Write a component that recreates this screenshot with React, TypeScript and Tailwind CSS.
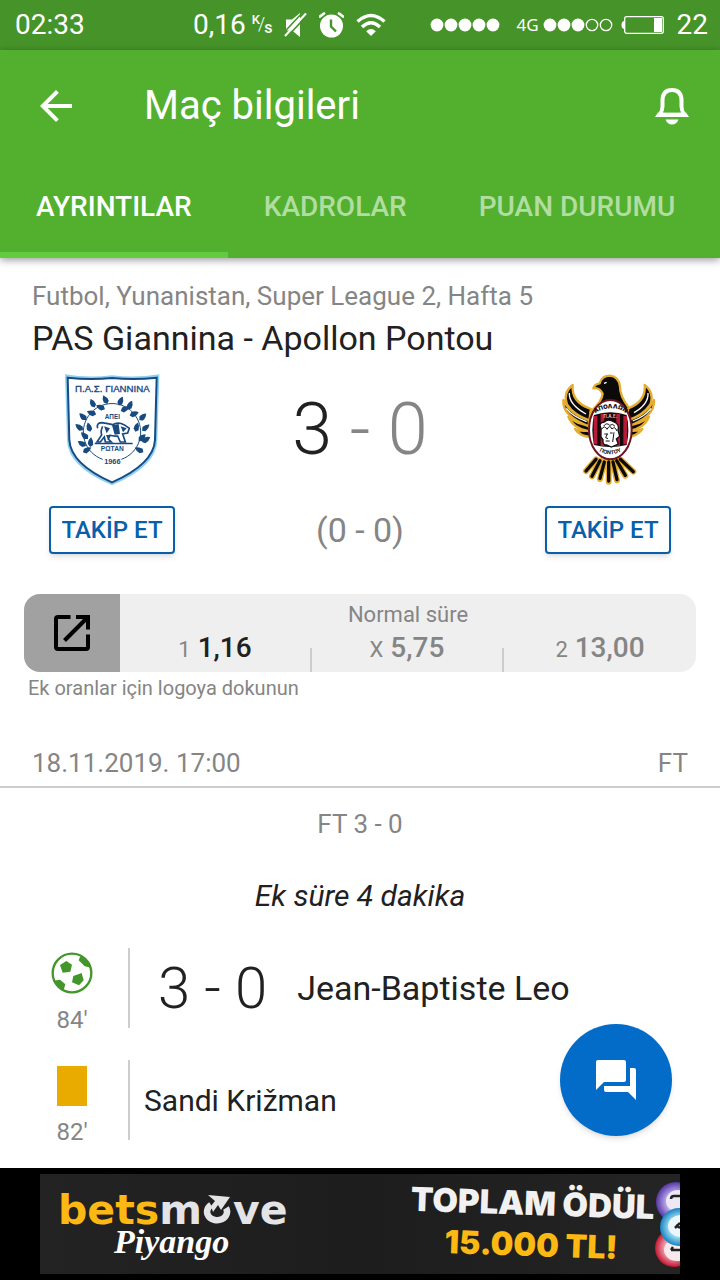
import type { ReactNode } from 'react';
import { MdArrowBack, MdForum } from 'react-icons/md';

interface Odd {
  label: string;
  value: string;
  winner?: boolean;
}

const TABS = ['AYRINTILAR', 'KADROLAR', 'PUAN DURUMU'];

const ODDS: Odd[] = [
  { label: '1', value: '1,16', winner: true },
  { label: 'X', value: '5,75' },
  { label: '2', value: '13,00' },
];

function SignalDots({ filled }: { filled: number }) {
  return (
    <svg width="70" height="14" viewBox="0 0 70 14">
      {[0, 1, 2, 3, 4].map((i) =>
        i < filled ? (
          <circle key={i} cx={7 + i * 14} cy="7" r="6.4" fill="#fff" />
        ) : (
          <circle key={i} cx={7 + i * 14} cy="7" r="5.7" fill="none" stroke="#fff" strokeWidth="1.3" />
        ),
      )}
    </svg>
  );
}

function MuteIcon() {
  return (
    <svg width="23" height="26" viewBox="0 0 23 26">
      <path d="M2 7.500H8L16 1V25L8 18.500H2Z" fill="#fff" />
      <path d="M-1.500 22L20 -1" stroke="#469429" strokeWidth="1.600" />
      <path d="M1 24L22 1.500" stroke="#fff" strokeWidth="2.200" />
      <path d="M2.500 25.500L23 3.500" stroke="#469429" strokeWidth="1.600" />
    </svg>
  );
}

function AlarmIcon() {
  return (
    <svg width="25" height="26" viewBox="0 0 25 26">
      <circle cx="12.500" cy="14" r="11.500" fill="#fff" />
      <path d="M1 4.500L5 1.500M24 4.500L20 1.500" stroke="#fff" strokeWidth="2.800" strokeLinecap="round" />
      <path d="M12 7.500V14.500L17 19.500" fill="none" stroke="#469429" strokeWidth="2.400" />
    </svg>
  );
}

function WifiIcon() {
  return (
    <svg width="30" height="24" viewBox="0 0 30 24" fill="none" stroke="#fff" strokeWidth="3.400">
      <path d="M1.500 8.500Q15 -3.500 28.500 8.500" />
      <path d="M6 14Q15 5.500 24 14" />
      <path d="M15 23L10.200 18.200Q15 14 19.800 18.200Z" fill="#fff" stroke="none" />
    </svg>
  );
}

function BatteryIcon() {
  return (
    <svg width="44" height="20" viewBox="0 0 44 20">
      <path d="M3.500 6Q.5 6 .5 10T3.500 14Z" fill="#fff" />
      <rect x="3.700" y="1.700" width="38.600" height="16.600" rx="2" fill="none" stroke="#fff" strokeWidth="1.300" />
      <rect x="33" y="3" width="8" height="14" fill="#fff" />
    </svg>
  );
}

function BellIcon() {
  return (
    <svg width="36" height="40" viewBox="0 0 36 40">
      <path
        d="M6 28.500Q8.500 25 8.500 21V14.500C8.500 7.500 12 4 18 4S27.500 7.500 27.500 14.500V21Q27.500 25 30 28.500Z"
        fill="none"
        stroke="#fff"
        strokeWidth="4"
      />
      <path d="M1 31L4 26.500H32L35 31Z" fill="#fff" />
      <path d="M9 26.600Q10.500 24 10.500 21.500H25.500Q25.500 24 27 26.600Z" fill="#52b02e" />
      <path d="M11.500 33.500H24.500Q22.500 38.500 18 38.500T11.500 33.500Z" fill="#fff" />
    </svg>
  );
}

function OpenIcon() {
  return (
    <svg width="38" height="38" viewBox="0 0 38 38" fill="none" stroke="#000" strokeWidth="4">
      <path d="M17.500 3H5Q3 3 3 5V33Q3 35 5 35H33Q35 35 35 33V20.500" />
      <path d="M11.500 26.500L34 4" />
      <path d="M23 1H37V15.500H33V7.500L30.500 5H23Z" fill="#000" stroke="none" />
    </svg>
  );
}

function BallIcon() {
  return (
    <svg width="42" height="42" viewBox="63 35 126 126">
      <circle cx="126" cy="98" r="58" fill="none" stroke="#43962a" strokeWidth="7" />
      <g fill="#43962a">
        <path d="M90 74L109 62L126 73L121 94L98 97Z" />
        <path d="M130 107L155 98L161 120L147 135L126 126Z" />
        <path d="M146 60L151 48Q176 58 184 82L164 78Z" />
        <path d="M70 121L90 118L106 132L101 149Q80 142 70 121Z" />
      </g>
    </svg>
  );
}

// x, y, rotation of every leaf around the ring
const LEAVES: [number, number, number][] = [
  [166, 104, 25], [152, 127, 65], [128, 115, 25], [125, 144, 70], [99, 155, 45],
  [117, 187, 15], [88, 187, 50], [104, 212, 45], [96, 236, 60], [122, 232, -5],
  [111, 255, -60], [212, 109, -25], [225, 132, -65], [240, 121, -25], [252, 147, -70],
  [278, 156, -45], [260, 187, -15], [287, 188, -50], [276, 218, -45], [288, 224, -60],
  [268, 255, 60],
];

function GianninaCrest() {
  return (
    <svg width="96" height="112" viewBox="42 27 288 336" role="img" aria-label="PAS Giannina">
      <path d="M45 28Q115 40 186 31Q257 40 328 28L322 225Q321 304 186 361Q52 304 51 225Z" fill="#8fd0f2" />
      <path
        d="M53 38Q120 46 186 39Q253 46 320 38L315 225Q311 297 186 352Q62 297 58 225Z"
        fill="#fff"
        stroke="#164b84"
        strokeWidth="6"
      />
      <text x="187" y="81" textAnchor="middle" fontSize="29" fill="#184a80" stroke="#184a80" strokeWidth="1" className="font-['Liberation_Sans']">
        Π.Α.Σ. ΓΙΑΝΝΙΝΑ
      </text>
      <path d="M158 283A86 86 0 1 1 214 283" fill="none" stroke="#184a80" strokeWidth="3" />
      <g fill="#184a80">
        {LEAVES.map(([x, y, r]) => (
          <path key={`${x}-${y}`} d="M0 -15Q9 -5 8 7L0 14L-8 6Q-9 -6 0 -15Z" transform={`translate(${x} ${y}) rotate(${-r})`} />
        ))}
        <text x="187" y="163" textAnchor="middle" fontSize="19" fontWeight="700" className="font-['Liberation_Sans']">ΑΠΕΙ</text>
        <text x="187" y="257" textAnchor="middle" fontSize="20" fontWeight="700" className="font-['Liberation_Sans']">ΡΩΤΑΝ</text>
        <text x="187" y="297" textAnchor="middle" fontSize="22" fontWeight="700" className="font-['Liberation_Sans']">1966</text>
        <path d="M134 233H248V238H134Z" />
      </g>
      <path
        d="M143 190Q138 174 155 173Q175 176 188 179Q204 170 222 179L238 190L233 204L218 207L226 231H211L203 213Q188 214 180 211L175 222L184 231H166L163 216L151 231H141L155 210Q151 198 158 184"
        fill="#fff"
        stroke="#184a80"
        strokeWidth="5"
      />
      <path d="M186 181L194 209L210 207L206 177ZM162 184L170 205L180 190ZM212 184L230 190L219 202ZM168 210L175 226L180 210Z" fill="#184a80" />
    </svg>
  );
}

function ApollonWing() {
  return (
    <>
      <path d="M105 192Q120 214 152 216L150 196Q120 201 105 192Z" />
      <path d="M85 155Q99 191 148 199L147 180Q110 178 85 155Z" />
      <path d="M70 105Q66 154 147 184L146 163Q92 150 70 105Z" />
      <path d="M98 60Q68 83 81 118Q102 150 148 166L153 132Q93 112 98 60Z" />
    </>
  );
}

function ApollonCrest() {
  return (
    <svg width="96" height="112" viewBox="60 27 288 336" role="img" aria-label="Apollon Pontou">
      {/* tail: gold outline first, black feathers over it */}
      <g fill="none" strokeLinecap="round">
        <path
          d="M168 283L138 318M180 287L156 334M193 291L180 342M206 291V350M219 291L231 346M230 287L256 332M241 283L280 320"
          stroke="#e5ad2f"
          strokeWidth="18"
        />
        <path
          d="M168 283L138 318M180 287L156 334M193 291L180 340M206 291V348M219 291L231 344M230 287L256 331M241 283L280 320"
          stroke="#0c0a08"
          strokeWidth="10"
        />
      </g>
      <g fill="#0c0a08" stroke="#e5ad2f" strokeWidth="7" strokeLinejoin="round">
        <ApollonWing />
        <g transform="matrix(-1 0 0 1 412 0)">
          <ApollonWing />
        </g>
        <path d="M160 70Q164 57 179 55Q186 32 209 32Q236 34 240 65Q239 92 266 128L255 165H165L152 140Q186 110 188 86Q178 66 160 70Z" />
      </g>
      <path d="M88 84Q86 118 138 147M79 130Q97 154 140 170" fill="none" stroke="#fff" strokeWidth="4" />
      <path d="M324 84Q326 118 282 143M333 130Q315 154 278 168" fill="none" stroke="#fff" strokeWidth="4" />
      <path d="M192 55L200 52" stroke="#fff" strokeWidth="4" />
      <ellipse cx="211" cy="194" rx="64" ry="89" fill="#fff" stroke="#6d1422" strokeWidth="6" />
      <path d="M162 150Q186 142 211 142T260 150Q270 194 260 240Q236 246 211 246T162 240Q152 194 162 150Z" fill="#16090c" />
      <path d="M161 153H172V238H161ZM182 146H193V243H182ZM229 146H240V243H229ZM250 153H261V238H250Z" fill="#b31b36" />
      <path
        d="M183 190Q174 173 193 171Q205 160 222 171Q240 179 234 195L239 214L229 222L235 237L214 246L200 240Q187 241 189 224L183 216Z"
        fill="#fff"
        stroke="#17100f"
        strokeWidth="4"
      />
      <path
        d="M184 194Q193 178 201 193Q209 177 216 192Q224 182 231 198M193 207H204M210 204H218M202 207L197 218L204 221M197 228H209M222 202L218 231M191 183Q200 171 209 181Q219 174 225 184"
        fill="none"
        stroke="#17100f"
        strokeWidth="3"
      />
      <path id="crest-top" d="M157 157Q170 132 211 130T265 157" fill="none" />
      <path id="crest-bottom" d="M163 248Q186 268 211 268T259 248" fill="none" />
      <text fontSize="18" fontWeight="900" fill="#111" className="font-['Inter']">
        <textPath href="#crest-top" startOffset="50%" textAnchor="middle">ΑΠΟΛΛΩΝ</textPath>
      </text>
      <text x="211" y="160" textAnchor="middle" fontSize="13" fontWeight="700" fill="#f5b8bb" className="font-['Inter']">Π.Α.Ε.</text>
      <text fontSize="16" fontWeight="700" fill="#111" className="font-['Inter']">
        <textPath href="#crest-bottom" startOffset="50%" textAnchor="middle">ΠΟΝΤΟΥ</textPath>
      </text>
    </svg>
  );
}

function LotteryBalls() {
  return (
    <svg width="26" height="100" viewBox="0 0 26 100" className="shrink-0">
      <defs>
        <radialGradient id="violet"><stop offset=".5" stopColor="#b9a8ea" /><stop offset="1" stopColor="#5536a4" /></radialGradient>
        <radialGradient id="red"><stop offset=".5" stopColor="#f5a0ae" /><stop offset="1" stopColor="#c01631" /></radialGradient>
        <radialGradient id="blue"><stop offset=".5" stopColor="#a5e0f6" /><stop offset="1" stopColor="#1583c1" /></radialGradient>
      </defs>
      <circle cx="22" cy="28" r="20" fill="url(#violet)" />
      <ellipse cx="24" cy="27" rx="12" ry="11" fill="#eee8f6" />
      <circle cx="20" cy="74" r="19" fill="url(#red)" />
      <ellipse cx="23" cy="76" rx="13" ry="11" fill="#f7e9ec" />
      <circle cx="25" cy="53" r="19" fill="url(#blue)" />
      <ellipse cx="27" cy="52" rx="13" ry="11" fill="#edf7fb" />
      <path d="M17 25Q17 22 20 22H26M17 76H26M17 76L19 73M21 54L26 49M22 51L26 54" fill="none" stroke="#222" strokeWidth="2.500" />
    </svg>
  );
}

function AdBanner() {
  return (
    <footer className="flex justify-center bg-black py-[6px]">
      <a
        href="#betsmove"
        className="flex h-[100px] w-full max-w-[640px] items-center overflow-hidden bg-linear-to-r from-[#232323] via-[#1d1d1d] to-[#242424] pl-[18px]"
      >
        <span className="flex flex-col">
          <span className="flex items-baseline font-['DejaVu_Sans'] text-[41px] leading-[36px] font-bold text-[#e4e4e6]">
            <span className="text-[#fcb813]">bets</span>m
            <svg width="32" height="30" viewBox="0 0 30 30" className="-ml-px overflow-visible">
              <path d="M9 11A10 8.500 0 1 0 24 14" fill="none" stroke="#e4e4e6" strokeWidth="6.500" />
              <path d="M6 1L28 3L19 16L16 11L11 18L9 12L13 7Z" fill="#e4e4e6" />
            </svg>
            ve
          </span>
          <span className="pl-14 font-['Liberation_Serif'] text-[34px] leading-[28px] font-bold text-white italic">
            Piyango
          </span>
        </span>
        <span className="ml-auto flex rotate-2 flex-col items-center font-['Inter'] text-[33px] leading-[41px] font-black">
          <span className="whitespace-nowrap text-[#f1f1f1]">TOPLAM ÖDÜL</span>
          <span className="text-[32px] text-[#fcb813]">15.000 TL!</span>
        </span>
        <LotteryBalls />
      </a>
    </footer>
  );
}

function FollowButton() {
  return (
    <button
      type="button"
      className="h-12 w-[126px] rounded-sm border-2 border-[#0860ad] bg-white text-[24px] leading-[24px] font-medium text-[#0860ad] shadow-md"
    >
      TAKİP ET
    </button>
  );
}

function EventRow({ icon, minute, children }: { icon: ReactNode; minute: string; children: ReactNode }) {
  return (
    <li className="flex h-20">
      <div className="ml-4 flex w-28 flex-col items-center justify-between pt-1">
        {icon}
        <span className="text-[24px] leading-[16px] text-[#858585]">{minute}</span>
      </div>
      <div className="flex flex-1 items-center border-l-2 border-[#cdcdcd] pl-[14px]">{children}</div>
    </li>
  );
}

export default function App() {
  return (
    <div className="flex min-h-screen flex-col bg-white font-['Roboto',sans-serif] text-[#212121]">
      {/* Status bar */}
      <div className="flex h-[50px] items-center bg-[#469429] pr-3 pl-[15px] text-[28px] text-white">
        <span>02:33</span>
        <span className="ml-auto">0,16</span>
        <span className="ml-[6px] flex text-[13px] leading-[13px] font-medium">
          <span className="pb-3">K</span>
          <span className="-ml-[2px] pt-1 text-[18px] font-light">/</span>
          <span className="-ml-px pt-2 text-[16px]">s</span>
        </span>
        <span className="ml-3 flex items-center gap-3">
          <MuteIcon />
          <AlarmIcon />
          <WifiIcon />
        </span>
        <span className="ml-11"><SignalDots filled={5} /></span>
        <span className="ml-4 font-['Noto_Sans'] text-[17px]">4G</span>
        <span className="ml-1"><SignalDots filled={3} /></span>
        <span className="ml-2"><BatteryIcon /></span>
        <span className="ml-3">22</span>
      </div>

      {/* App bar + tabs */}
      <header className="relative z-10 bg-[#52b02e] text-white shadow-[0_2px_8px_rgba(0,0,0,0.4)]">
        <div className="flex h-28 items-center px-8">
          <button type="button" aria-label="Geri">
            <MdArrowBack size={48} />
          </button>
          <h1 className="ml-16 text-[40px] leading-[48px]">Maç bilgileri</h1>
          <button type="button" aria-label="Bildirimler" className="ml-auto -mr-[2px]">
            <BellIcon />
          </button>
        </div>
        <nav className="flex h-24">
          {TABS.map((tab, i) => (
            <button
              key={tab}
              type="button"
              className={
                i === 0
                  ? 'border-b-[6px] border-[#62cb3f] px-9 text-[28px] font-medium'
                  : 'border-b-[6px] border-transparent px-9 text-[28px] font-medium text-[#b2dda2]'
              }
            >
              {tab}
            </button>
          ))}
        </nav>
      </header>

      <main className="relative flex-1 pt-5 pb-7">
        <div className="px-8">
          <p className="text-[26px] leading-[36px] text-[#858585]">Futbol, Yunanistan, Super League 2, Hafta 5</p>
          <h2 className="text-[34px] leading-[48px]">PAS Giannina - Apollon Pontou</h2>
        </div>

        {/* Teams and score */}
        <section className="mt-3 flex justify-between px-[49px]">
          <div className="flex flex-col items-center gap-5">
            <GianninaCrest />
            <FollowButton />
          </div>
          <div className="flex flex-col items-center gap-5">
            <p className="text-[72px] leading-[112px] font-light text-[#858585]">
              <span className="text-[#212121]">3</span> - 0
            </p>
            <p className="text-[34px] leading-[48px] text-[#858585]">(0 - 0)</p>
          </div>
          <div className="flex flex-col items-center gap-5">
            <ApollonCrest />
            <FollowButton />
          </div>
        </section>

        {/* Odds */}
        <section className="mt-10 px-6">
          <div className="flex h-[78px] overflow-hidden rounded-[16px] bg-[#efefef]">
            <button type="button" aria-label="Oranları aç" className="flex w-24 items-center justify-center bg-[#a1a1a1]">
              <OpenIcon />
            </button>
            <div className="flex flex-1 flex-col">
              <p className="pt-2 text-center text-[22px] leading-[26px] text-[#858585]">Normal süre</p>
              <div className="flex flex-1">
                {ODDS.map((odd) => (
                  <div key={odd.label} className="group flex flex-1 items-end">
                    <p className="flex-1 pb-[6px] text-center text-[28px] leading-[32px] text-[#858585]">
                      <span className="text-[22px]">{odd.label}</span>{' '}
                      <span className={odd.winner ? 'font-medium text-[#212121]' : 'font-medium'}>{odd.value}</span>
                    </p>
                    <span className="h-6 w-[2px] bg-[#cdcdcd] group-last:hidden" />
                  </div>
                ))}
              </div>
            </div>
          </div>
          <p className="pl-1 text-[20px] leading-[32px] text-[#858585]">Ek oranlar için logoya dokunun</p>
        </section>

        <div className="mt-9 flex h-12 items-center justify-between border-b-2 border-[#cdcdcd] px-8 text-[26px] text-[#858585]">
          <span>18.11.2019. 17:00</span>
          <span>FT</span>
        </div>

        {/* Timeline */}
        <p className="text-center text-[26px] leading-[72px] text-[#858585]">FT 3 - 0</p>
        <p className="text-center text-[30px] leading-[72px] italic">Ek süre 4 dakika</p>
        <ul className="flex flex-col gap-8 pt-4">
          <EventRow icon={<BallIcon />} minute="84'">
            <span className="pl-[14px] text-[58px] leading-[80px] font-light">3 - 0</span>
            <span className="pl-[30px] text-[34px]">Jean-Baptiste Leo</span>
          </EventRow>
          <EventRow icon={<span className="mt-[2px] h-10 w-[30px] bg-[#eaab00]" />} minute="82'">
            <span className="text-[30px]">Sandi Križman</span>
          </EventRow>
        </ul>

        <button
          type="button"
          aria-label="Sohbet"
          className="absolute right-12 bottom-8 flex size-28 items-center justify-center rounded-full bg-[#036bc8] text-white shadow-md"
        >
          <MdForum size={48} />
        </button>
      </main>

      <AdBanner />
    </div>
  );
}
